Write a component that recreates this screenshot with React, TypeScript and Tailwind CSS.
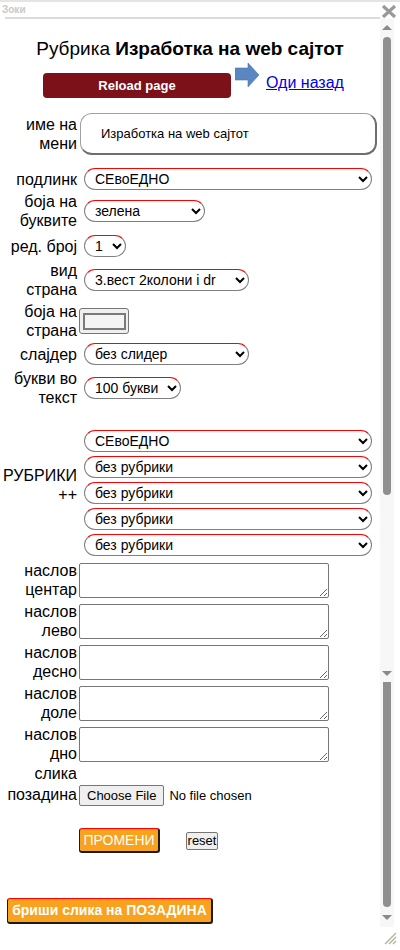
import type { ReactNode } from "react";

function Row({
  label,
  children,
  className = "",
  labelClass = "",
}: {
  label: ReactNode;
  children: ReactNode;
  className?: string;
  labelClass?: string;
}) {
  return (
    <div className={`flex items-center ${className}`}>
      <div className={`w-[77px] shrink-0 text-right text-[16px] leading-[19px] text-black ${labelClass}`}>
        {label}
      </div>
      {children}
    </div>
  );
}

function Select({ options, width }: { options: string[]; width: string }) {
  return (
    <select
      defaultValue={options[0]}
      className={`ml-[7px] h-[22px] ${width} rounded-full border border-[#808080] border-t-[#ff0000] bg-white pl-[6px] text-[14px] text-black`}
    >
      {options.map((o) => (
        <option key={o}>{o}</option>
      ))}
    </select>
  );
}

function TextArea() {
  return (
    <textarea className="ml-[2px] h-[35px] w-[250px] rounded-[2px] border border-[#767676] bg-white" />
  );
}

function ScrollArrow({ down }: { down?: boolean }) {
  return (
    <svg width="10" height="5" viewBox="0 0 10 5" className="mx-auto block">
      <polygon points={down ? "0,0 10,0 5,5" : "5,0 10,5 0,5"} fill="#8a8a8a" />
    </svg>
  );
}

export default function App() {
  return (
    <div className="relative h-[950px] w-[400px] overflow-hidden border-t-2 border-[#e4e4e4] bg-white font-['Liberation_Sans',Arial,sans-serif]">
      {/* window header */}
      <div className="flex">
        <div className="flex w-[380px] flex-col">
          <div className="h-[15px] pl-[2px] pt-[2px] text-[10px] font-bold leading-[12px] text-[#c8c8c8]">Зоки</div>
          <div className="ml-[5px] h-[2px] bg-[#dcdcdc]" />
        </div>
        <div className="pl-[1px] pt-[2px]">
          <svg width="16" height="15" viewBox="0 0 16 15">
            <path d="M2 2 L14 13 M14 2 L2 13" stroke="#9a9a9a" strokeWidth="3.2" />
          </svg>
        </div>
      </div>

      <div className="flex">
        {/* content */}
        <div className="w-[380px] shrink-0">
          <h1 className="mt-[19px] text-center text-[19px] leading-[22px] text-black">
            Рубрика <b>Изработка на web сајтот</b>
          </h1>

          <div className="mt-[3px] flex items-start pl-[43px]">
            <button className="mt-[10px] h-[25px] w-[188px] rounded-[4px] bg-[#7d111a] text-[13px] font-bold text-white">
              Reload page
            </button>
            <svg width="25" height="25" viewBox="0 0 25 25" className="ml-[4px]">
              <polygon points="0,5 13,5 13,0 24,12 13,24 13,17 0,17" fill="#5b87c0" stroke="#4a76ad" strokeWidth="0.6" />
            </svg>
            <a href="#" className="ml-[6px] mt-[11px] text-[16px] leading-[18px] text-[#0000ee] underline">
              Оди назад
            </a>
          </div>

          <div className="mt-[15px] flex flex-col">
            <Row label={<>име на<br />мени</>}>
              <input
                defaultValue="Изработка на web сајтот"
                className="ml-[3px] h-[42px] w-[297px] rounded-[12px] border border-[#a0a0a0] border-b-2 border-r-2 border-b-[#6e6e6e] border-r-[#6e6e6e] pl-[20px] text-[13px] text-black"
              />
            </Row>
            <Row label="подлинк" className="mt-[13px]">
              <Select options={["СЕвоЕДНО"]} width="w-[288px]" />
            </Row>
            <Row label={<>боја на<br />буквите</>} className="mt-[2px]">
              <Select options={["зелена"]} width="w-[121px]" />
            </Row>
            <Row label="ред. број" className="mt-[5px]">
              <Select options={["1"]} width="w-[42px]" />
            </Row>
            <Row label={<>вид<br />страна</>} className="mt-[4px]">
              <Select options={["3.вест 2колони i dr"]} width="w-[165px]" />
            </Row>
            <Row label={<>боја на<br />страна</>} className="mt-[3px]">
              <div className="ml-[2px] flex h-[26px] w-[50px] items-center justify-center rounded-[3px] border border-[#767676] bg-[#efefef]">
                <div className="h-[17px] w-[43px] border-2 border-[#7a7a7a] bg-[#f4f4f4]" />
              </div>
            </Row>
            <Row label="слајдер" className="mt-[3px]">
              <Select options={["без слидер"]} width="w-[165px]" />
            </Row>
            <Row label={<>букви во<br />текст</>} className="mt-[4px]">
              <Select options={["100 букви"]} width="w-[97px]" />
            </Row>

            <Row label={<>РУБРИКИ<br />++</>} className="mt-[23px]" labelClass="mb-[16px]">
              <div className="flex flex-col gap-[4px]">
                <Select options={["СЕвоЕДНО"]} width="w-[288px]" />
                <Select options={["без рубрики"]} width="w-[288px]" />
                <Select options={["без рубрики"]} width="w-[288px]" />
                <Select options={["без рубрики"]} width="w-[288px]" />
                <Select options={["без рубрики"]} width="w-[288px]" />
              </div>
            </Row>

            <div className="mt-[5px] flex flex-col gap-[3px]">
              <Row label={<>наслов<br />центар</>}>
                <TextArea />
              </Row>
              <Row label={<>наслов<br />лево</>}>
                <TextArea />
              </Row>
              <Row label={<>наслов<br />десно</>}>
                <TextArea />
              </Row>
              <Row label={<>наслов<br />доле</>}>
                <TextArea />
              </Row>
              <Row label={<>наслов<br />дно</>}>
                <TextArea />
              </Row>
            </div>

            <div className="flex items-end">
              <div className="w-[77px] shrink-0 text-right text-[16px] leading-[21px] text-black">
                слика
                <br />
                позадина
              </div>
              <input
                type="file"
                className="ml-[2px] mb-[-1px] w-[200px] text-[13px] leading-[19px] text-black file:mr-[5px] file:h-[21px] file:rounded-[2px] file:border file:border-[#767676] file:bg-[#efefef] file:px-[7px] file:text-[13px] file:text-black"
              />
            </div>
          </div>

          <div className="mt-[23px] flex items-center pl-[79px]">
            <button className="h-[25px] w-[81px] rounded-[3px] border border-b-2 border-r-2 border-[#1a1a1a] border-t-[#ff0000] bg-[#f8a21d] text-[14px] text-white">
              ПРОМЕНИ
            </button>
            <button className="ml-[26px] h-[18px] w-[32px] rounded-[2px] border border-[#767676] bg-[#efefef] text-[13px] leading-[14px] text-black">
              reset
            </button>
          </div>

          <button className="ml-[7px] mt-[45px] h-[26px] w-[206px] rounded-[3px] border border-b-2 border-r-2 border-[#1a1a1a] border-t-[#ff0000] bg-[#f8a21d] text-[14px] font-bold text-white">
            бриши слика на ПОЗАДИНА
          </button>
        </div>

        {/* scrollbars */}
        <div className="flex h-[908px] w-[14px] flex-col bg-[#f7f7f7]">
          <div className="mt-[6px]">
            <ScrollArrow />
          </div>
          <div className="mx-auto mt-[7px] h-[458px] w-[8px] rounded-[4px] bg-[#8f8f8f]" />
          <div className="mt-[176px]">
            <ScrollArrow down />
          </div>
          <div className="mx-auto mt-[6px] h-[225px] w-[8px] rounded-b-[4px] bg-[#8f8f8f]" />
          <div className="mt-[8px]">
            <ScrollArrow down />
          </div>
        </div>
      </div>

      {/* resize grip */}
      <svg width="14" height="14" viewBox="0 0 14 14" className="absolute bottom-[5px] right-[3px]">
        <path d="M13 2 L2 13 M13 6 L6 13 M13 10 L10 13" stroke="#b0ae98" strokeWidth="1.2" />
      </svg>
    </div>
  );
}
